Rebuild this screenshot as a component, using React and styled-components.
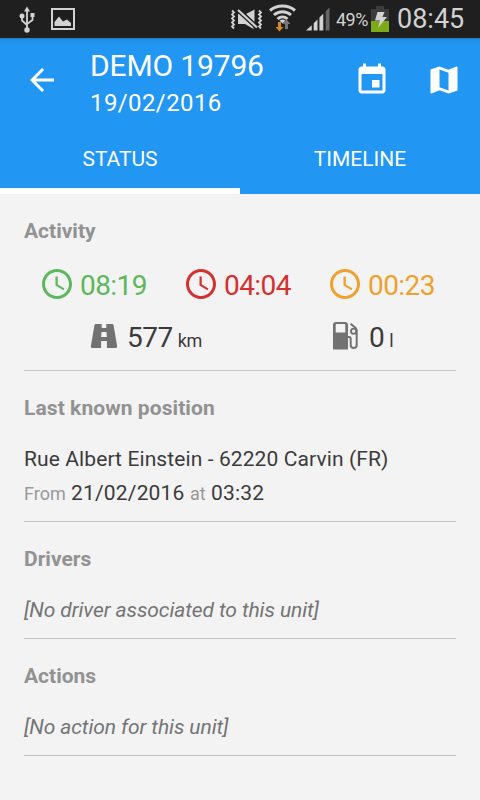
import React from "react";
import styled, { createGlobalStyle } from "styled-components";

const GlobalStyle = createGlobalStyle`
  * { box-sizing: border-box; }
  body { margin: 0; background: #f3f3f3; font-family: Roboto, "Noto Sans", sans-serif; }
`;

const Screen = styled.div`
  width: 480px;
  height: 800px;
  display: flex;
  flex-direction: column;
  background: #f3f3f3;
  color: #3b3b3b;
  overflow: hidden;
`;

const Icon = styled.svg`
  display: block;
  flex: none;
  width: ${(p) => p.$w || 36}px;
  height: ${(p) => p.$h || p.$w || 36}px;
  margin-left: ${(p) => p.$ml || 0}px;
  margin-bottom: ${(p) => p.$mb || 0}px;
  fill: currentColor;
`;

const StatusBar = styled.div`
  height: 38px;
  flex: none;
  display: flex;
  align-items: flex-start;
  background: #1f1f1f;
  color: #d2d2d2;
`;

const Spacer = styled.div`
  flex: 1;
`;

const Battery = styled.span`
  width: 35px;
  margin-left: 6px;
  font-size: 18px;
  line-height: 40px;
  letter-spacing: -0.55px;
  white-space: nowrap;
`;

const Clock = styled.span`
  width: 83px;
  margin-left: 8px;
  font-size: 27px;
  line-height: 38px;
`;

const Header = styled.header`
  height: 156px;
  flex: none;
  display: flex;
  flex-direction: column;
  background: linear-gradient(#1f7ecb, #208ce6 2px, #2196f3 6px);
  color: #fff;
`;

const AppBar = styled.div`
  height: 84px;
  display: flex;
  align-items: center;
  padding: 0 18px 0 24px;
`;

const Titles = styled.div`
  flex: 1;
  padding: 10px 0 0 30px;
`;

const Title = styled.div`
  font-size: 30px;
  line-height: 36px;
  letter-spacing: -0.15px;
`;

const Subtitle = styled.div`
  font-size: 24px;
  line-height: 38px;
  letter-spacing: 0.4px;
`;

const Actions = styled.div`
  display: flex;
  gap: 36px;
`;

const Tabs = styled.nav`
  flex: 1;
  display: grid;
  grid-template-columns: 1fr 1fr;
`;

const Tab = styled.div`
  text-align: center;
  font-size: 21px;
  line-height: 75px;
  height: 72px;
  border-bottom: 6px solid ${(p) => (p.$active ? "#fff" : "transparent")};
`;

const Section = styled.section`
  margin: 0 24px;
  padding: 23px 0 ${(p) => p.$bottom || 11}px;
  border-bottom: 1px solid #c3c3c3;
`;

const Heading = styled.h2`
  margin: 0 0 ${(p) => p.$gap || 20}px;
  font-size: 21px;
  line-height: 28px;
  font-weight: 700;
  color: #929292;
  letter-spacing: ${(p) => p.$ls || 0}px;
`;

const Times = styled.div`
  display: grid;
  grid-template-columns: repeat(3, 1fr);
  height: 52px;
`;

const Time = styled.div`
  display: flex;
  align-items: center;
  gap: 5px;
  padding-left: 15px;
  font-size: 28px;
  line-height: 54px;
  height: 54px;
  letter-spacing: -0.55px;
  color: ${(p) => p.$color};
`;

const Totals = styled.div`
  display: grid;
  grid-template-columns: 242px 1fr;
  height: 52px;
`;

const Total = styled.div`
  display: flex;
  align-items: center;
  padding-left: 66px;
  line-height: 56px;
  height: 56px;
  color: #727272;
`;

const Amount = styled.span`
  margin-left: 9px;
  font-size: 28px;
  letter-spacing: -0.45px;
  color: #3b3b3b;
`;

const Unit = styled.small`
  font-size: 18px;
  margin-left: 5px;
`;

const Line = styled.div`
  font-size: 21px;
  line-height: 34px;
  height: 34px;
  white-space: nowrap;
  letter-spacing: ${(p) => p.$ls || 0}px;
`;

const Minor = styled.span`
  font-size: 18px;
  letter-spacing: 0;
  color: #999;
`;

const Empty = styled(Line)`
  font-style: italic;
  letter-spacing: -0.1px;
  color: #747474;
`;

const UsbIcon = () => (
  <Icon viewBox="0 0 16 28" $w={16} $h={28} $ml={19}>
    <path d="M8 .5 11 5.500H5z" />
    <path d="M8 4v20M3 11v3.500L8 19M13.500 10v4L8 18" fill="none" stroke="currentColor" strokeWidth="1.800" />
    <circle cx="3" cy="10" r="2.500" />
    <rect x="11.500" y="7" width="4" height="4" />
    <circle cx="8" cy="24" r="2.700" />
  </Icon>
);

const PictureIcon = () => (
  <Icon viewBox="0 0 24 22" $w={24} $h={22} $ml={16}>
    <rect x="1" y="1" width="22" height="20" fill="none" stroke="currentColor" strokeWidth="2" />
    <path d="M3.500 18v-4L8 8.500l4 5 4-2 4 3.500V18z" />
  </Icon>
);

const MuteIcon = () => (
  <Icon viewBox="0 0 32 22" $w={32} $h={22}>
    <g fill="none" stroke="currentColor" strokeWidth="1.800">
      <path d="M1 1.500l2 2-2 2 2 2-2 2 2 2-2 2 2 2-2 2 2 2" />
      <path d="M28 1.500l2 2-2 2 2 2-2 2 2 2-2 2 2 2-2 2 2 2" />
    </g>
    <path d="M7 5h4l11.500 10v5L14 15H7zM15 5l8.500-4.500V13z" />
    <path d="M7 1 26 18.500" stroke="#1f1f1f" strokeWidth="4.500" />
    <path d="M7 1 26 18.500" stroke="currentColor" strokeWidth="2.200" />
  </Icon>
);

const WifiIcon = () => (
  <Icon viewBox="0 0 27 28" $w={27} $h={28} $ml={6}>
    <g fill="none" stroke="currentColor" strokeWidth="3">
      <path d="M1 6.500C8 .5 19 .5 26 6.500" />
      <path d="M5 11c5-4.500 12-4.500 17 0" />
      <path d="M8.500 15c3-2.700 7-2.700 10 0" />
    </g>
    <path d="M10.500 16.500c2-1.200 4-1.200 6 0l-3 3z" />
    <path d="M9 18h3v5h2.500l-4 4.500L6.500 23H9z" fill="#d98728" />
    <path d="M16 25v-5h-2.500l4-4.500 4 4.500H19v5z" fill="#777" />
  </Icon>
);

const SignalIcon = () => (
  <Icon viewBox="0 0 25 24" $w={24} $h={24} $ml={10}>
    <path d="M0 24l6-5.500V24zM8 24v-7.500l4-4V24zM14 24V10.500l4-4V24z" />
    <path d="M20.500 24V4l4-4v24z" fill="#666" />
  </Icon>
);

const ChargeIcon = () => (
  <Icon viewBox="0 0 18 26" $w={18} $h={26}>
    <path d="M0 3h5V0h8v3h5v12H0z" fill="#3c3c3c" />
    <path d="M0 15h18v11H0z" fill="#7bac17" />
    <path d="M6.500 6h7l-2 5h4.500L7 22l2-7.500H4z" />
  </Icon>
);

const BackIcon = () => (
  <Icon viewBox="0 0 24 24">
    <path d="M20 11H7.830l5.590-5.590L12 4l-8 8 8 8 1.410-1.410L7.830 13H20z" />
  </Icon>
);

const EventIcon = () => (
  <Icon viewBox="0 0 24 24">
    <path d="M17 12h-5v5h5v-5zM16 1v2H8V1H6v2H5c-1.110 0-1.990.9-1.990 2L3 19c0 1.100.89 2 2 2h14c1.100 0 2-.9 2-2V5c0-1.100-.9-2-2-2h-1V1h-2zm3 18H5V8h14v11z" />
  </Icon>
);

const MapIcon = () => (
  <Icon viewBox="0 0 24 24">
    <path d="M20.500 3l-.16.03L15 5.100 9 3 3.360 4.900c-.21.07-.36.25-.36.480V20.500c0 .28.22.5.5.5l.16-.03L9 18.900l6 2.100 5.640-1.900c.21-.07.36-.25.36-.48V3.500c0-.28-.22-.5-.5-.5zM15 19l-6-2.110V5l6 2.110V19z" />
  </Icon>
);

const ClockIcon = () => (
  <Icon viewBox="0 0 24 24" $mb={4}>
    <path d="M11.990 2C6.470 2 2 6.480 2 12s4.470 10 9.990 10C17.520 22 22 17.520 22 12S17.520 2 11.990 2zM12 20c-4.420 0-8-3.580-8-8s3.580-8 8-8 8 3.580 8 8-3.580 8-8 8z" />
    <path d="M12.500 7H11v6l5.250 3.150.75-1.230-4.500-2.670z" />
  </Icon>
);

const RoadIcon = () => (
  <Icon viewBox="0 0 28 28" $w={28} $mb={6}>
    <path
      fillRule="evenodd"
      d="M5.800 2h5.900v4h4.600V2h5.900c.7 0 1.100.3 1.300 1l3.600 21c.2 1.300-.2 2-1.300 2h-8.900v-7h-5.800v7H2.200C1.100 26 .7 25.300.9 24L4.500 3c.2-.7.600-1 1.300-1zM11.500 10l-.3 5h5.600l-.3-5z"
    />
  </Icon>
);

const FuelIcon = () => (
  <Icon viewBox="0 0 28 28" $w={28} $mb={6}>
    <path fillRule="evenodd" d="M4 0h9c1.900 0 3 1.100 3 3v24.500H1V3c0-1.900 1.100-3 3-3zm.5 2c-.5 0-.8.3-.8.8V10.500h9.600V2.800c0-.5-.3-.8-.8-.8z" />
    <path
      d="M15 15h2c1.200 0 1.700.7 1.700 2v6c0 4 6 4 6 0V8.500c0-1-.3-1.700-1-2.400L18.500 1.800"
      fill="none"
      stroke="currentColor"
      strokeWidth="2"
    />
    <circle cx="21.600" cy="9.200" r="2.600" fill="none" stroke="currentColor" strokeWidth="1.900" />
  </Icon>
);

const StatusIcon = styled.div`
  padding-top: ${(p) => p.$top}px;
`;

export default function App() {
  return (
    <Screen>
      <GlobalStyle />
      <StatusBar>
        <StatusIcon $top={6}><UsbIcon /></StatusIcon>
        <StatusIcon $top={8}><PictureIcon /></StatusIcon>
        <Spacer />
        <StatusIcon $top={9}><MuteIcon /></StatusIcon>
        <StatusIcon $top={4}><WifiIcon /></StatusIcon>
        <StatusIcon $top={7}><SignalIcon /></StatusIcon>
        <Battery>49%</Battery>
        <StatusIcon $top={6}><ChargeIcon /></StatusIcon>
        <Clock>08:45</Clock>
      </StatusBar>
      <Header>
        <AppBar>
          <BackIcon />
          <Titles>
            <Title>DEMO 19796</Title>
            <Subtitle>19/02/2016</Subtitle>
          </Titles>
          <Actions>
            <EventIcon />
            <MapIcon />
          </Actions>
        </AppBar>
        <Tabs>
          <Tab $active>STATUS</Tab>
          <Tab>TIMELINE</Tab>
        </Tabs>
      </Header>
      <Section $bottom={7}>
        <Heading $gap={14}>Activity</Heading>
        <Times>
          <Time $color="#5cb85c"><ClockIcon />08:19</Time>
          <Time $color="#d4302f"><ClockIcon />04:04</Time>
          <Time $color="#f0a02c"><ClockIcon />00:23</Time>
        </Times>
        <Totals>
          <Total><RoadIcon /><Amount>577<Unit>km</Unit></Amount></Total>
          <Total><FuelIcon /><Amount>0<Unit>l</Unit></Amount></Total>
        </Totals>
      </Section>
      <Section>
        <Heading $ls={0.08}>Last known position</Heading>
        <Line $ls={0.1}>Rue Albert Einstein - 62220 Carvin (FR)</Line>
        <Line $ls={0.17}><Minor>From</Minor> 21/02/2016 <Minor>at</Minor> 03:32</Line>
      </Section>
      <Section>
        <Heading>Drivers</Heading>
        <Empty>[No driver associated to this unit]</Empty>
      </Section>
      <Section>
        <Heading>Actions</Heading>
        <Empty>[No action for this unit]</Empty>
      </Section>
    </Screen>
  );
}
